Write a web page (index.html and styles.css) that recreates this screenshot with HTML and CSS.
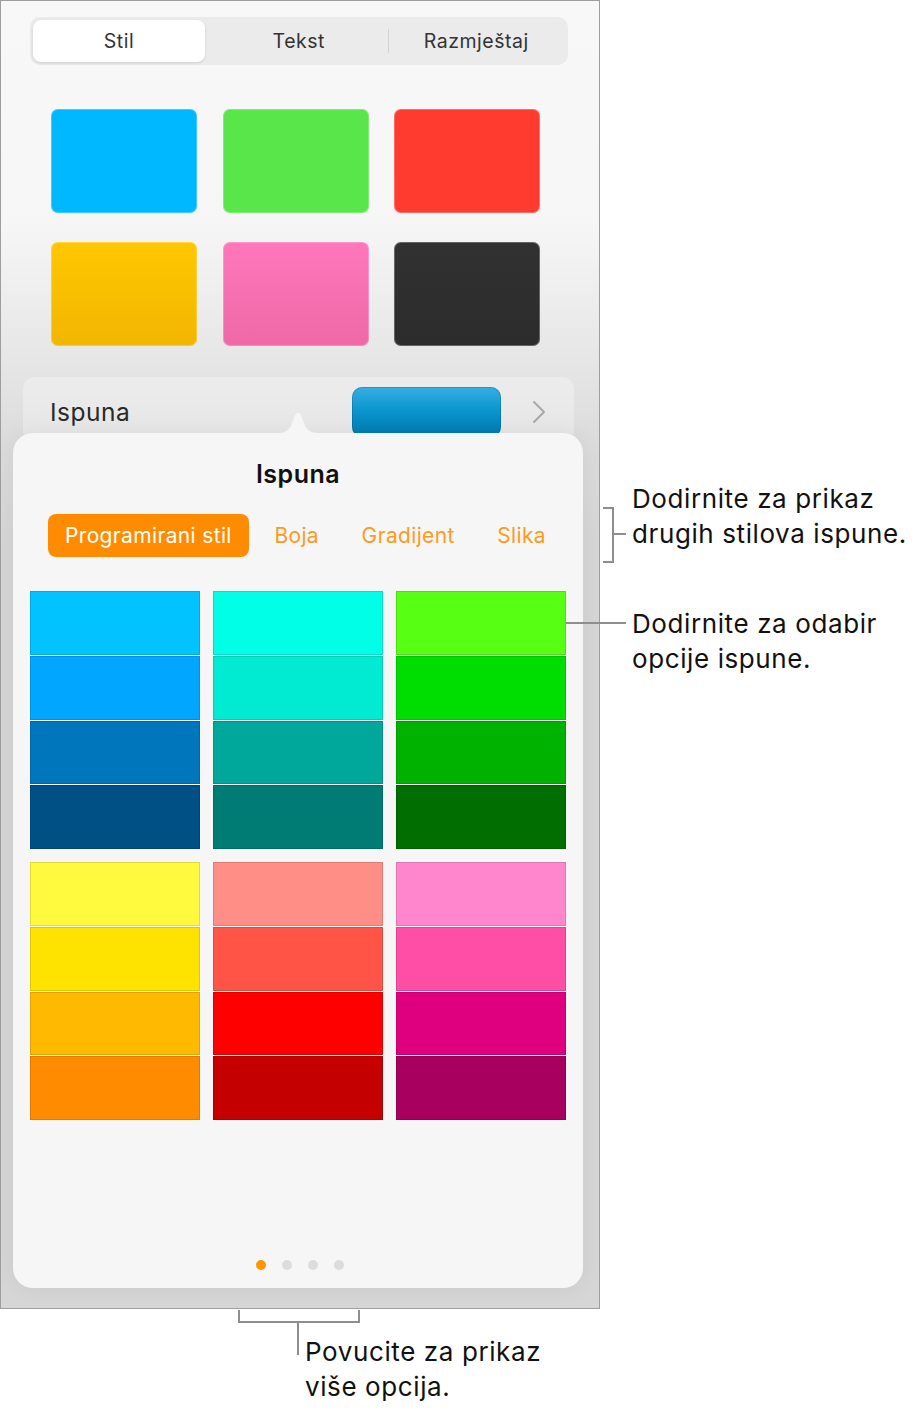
FILE: index.html
```html
<!DOCTYPE html>
<html>
<head>
    <meta charset="utf-8">
    <link rel="stylesheet" href="styles.css">
</head>
<body>
    <div class="page">
        <div class="panel">
            <div class="segmented">
                <div class="seg seg-active">Stil</div>
                <div class="seg">Tekst</div>
                <div class="seg seg-divided">Razmještaj</div>
            </div>

            <div class="presets">
                <div class="preset preset-blue"></div>
                <div class="preset preset-green"></div>
                <div class="preset preset-red"></div>
                <div class="preset preset-yellow"></div>
                <div class="preset preset-pink"></div>
                <div class="preset preset-dark"></div>
            </div>

            <div class="fill-row">
                <div class="fill-label">Ispuna</div>
                <div class="fill-well"></div>
                <svg class="fill-chevron" width="14" height="24" viewBox="0 0 14 24">
                    <path d="M2 2 L12 12 L2 22" fill="none" stroke="#a9a9a9" stroke-width="2" stroke-linecap="round" stroke-linejoin="round"/>
                </svg>
            </div>

            <div class="popover">
                <svg class="popover-arrow" width="40" height="24" viewBox="0 0 40 24">
                    <path d="M0 23 C8 23 10 20 13 16 L17 5 Q20 0 23 5 L27 16 C30 20 32 23 40 23 Z" fill="#f6f6f6"/>
                </svg>
                <h2 class="popover-title">Ispuna</h2>

                <div class="tabs">
                    <div class="tab tab-active">Programirani stil</div>
                    <div class="tab">Boja</div>
                    <div class="tab">Gradijent</div>
                    <div class="tab">Slika</div>
                </div>

                <div class="palette">
                    <div class="shade-group">
                        <div class="shade" style="background:#00c3ff"></div>
                        <div class="shade" style="background:#00a6ff"></div>
                        <div class="shade" style="background:#0076bd"></div>
                        <div class="shade" style="background:#004f85"></div>
                    </div>
                    <div class="shade-group">
                        <div class="shade" style="background:#00ffe7"></div>
                        <div class="shade" style="background:#00ebd1"></div>
                        <div class="shade" style="background:#00a79b"></div>
                        <div class="shade" style="background:#007c74"></div>
                    </div>
                    <div class="shade-group">
                        <div class="shade" style="background:#57ff13"></div>
                        <div class="shade" style="background:#00dd00"></div>
                        <div class="shade" style="background:#00b200"></div>
                        <div class="shade" style="background:#006e00"></div>
                    </div>
                    <div class="shade-group">
                        <div class="shade" style="background:#fffa3e"></div>
                        <div class="shade" style="background:#ffe300"></div>
                        <div class="shade" style="background:#ffba00"></div>
                        <div class="shade" style="background:#ff8b00"></div>
                    </div>
                    <div class="shade-group">
                        <div class="shade" style="background:#ff8e86"></div>
                        <div class="shade" style="background:#ff5446"></div>
                        <div class="shade" style="background:#ff0000"></div>
                        <div class="shade" style="background:#c50000"></div>
                    </div>
                    <div class="shade-group">
                        <div class="shade" style="background:#ff86cc"></div>
                        <div class="shade" style="background:#ff4ea6"></div>
                        <div class="shade" style="background:#df007f"></div>
                        <div class="shade" style="background:#a8005e"></div>
                    </div>
                </div>

                <div class="dots">
                    <span class="dot dot-active"></span>
                    <span class="dot"></span>
                    <span class="dot"></span>
                    <span class="dot"></span>
                </div>
            </div>
        </div>

        <!-- callouts -->
        <div class="bracket bracket-tabs"></div>
        <div class="leader leader-tabs"></div>
        <p class="callout callout-tabs">Dodirnite za prikaz<br>drugih stilova ispune.</p>

        <div class="leader leader-palette"></div>
        <p class="callout callout-palette">Dodirnite za odabir<br>opcije ispune.</p>

        <div class="bracket-bottom"></div>
        <div class="leader-down"></div>
        <p class="callout callout-dots">Povucite za prikaz<br>više opcija.</p>
    </div>
</body>
</html>
```

FILE: styles.css
```css
body {
    margin: 0;
    background: #fff;
    font-family: 'Inter', 'Noto Sans', sans-serif;
}

.page {
    position: relative;
    width: 924px;
    height: 1412px;
}

.panel {
    box-sizing: border-box;
    width: 600px;
    height: 1309px;
    padding-top: 16px;
    border: 1px solid #9e9e9e;
    background: linear-gradient(to bottom, #f8f8f8 0, #f6f6f6 220px, #e6e6e6 360px, #dcdcdc 440px, #d6d6d6 540px, #d6d6d6 100%);
}

/* segmented control */
.segmented {
    display: flex;
    height: 48px;
    margin: 0 31px 0 29px;
    padding: 3px;
    box-sizing: border-box;
    background: #ebebeb;
    border-radius: 10px;
}

.seg {
    flex: 1;
    display: flex;
    align-items: center;
    justify-content: center;
    position: relative;
    font-size: 19.5px;
    letter-spacing: 0.5px;
    color: #333;
}

.seg-active {
    flex: 0 0 172px;
    margin-right: 5px;
    background: #fff;
    border-radius: 8px;
    box-shadow: 0 1px 3px rgba(0,0,0,0.12);
}

.seg-divided::before {
    content: '';
    position: absolute;
    left: 0;
    top: 9px;
    width: 1px;
    height: 24px;
    background: #d4d4d4;
}

/* preset swatches */
.presets {
    display: grid;
    grid-template-columns: repeat(3, 146px);
    grid-auto-rows: 104px;
    column-gap: 25.5px;
    row-gap: 29px;
    margin-top: 44px;
    padding-left: 50px;
}

.preset {
    border-radius: 7px;
    box-shadow: inset 0 0 0 1px rgba(255,255,255,0.25);
}

.preset-blue { background: #00b8ff; }
.preset-green { background: #58e64a; }
.preset-red { background: #ff3b30; }
.preset-yellow { background: linear-gradient(to bottom, #ffc700, #f2b600); }
.preset-pink { background: linear-gradient(to bottom, #ff77bb, #ee69a6); }
.preset-dark { background: linear-gradient(to bottom, #313131, #2c2c2c); }

/* fill row */
.fill-row {
    display: flex;
    align-items: flex-start;
    height: 66px;
    box-sizing: border-box;
    margin: 31px 25px 0 22px;
    padding: 10px 28px 0 27px;
    background: rgba(255,255,255,0.3);
    border-radius: 12px;
}

.fill-label {
    flex: 1;
    font-size: 24.5px;
    letter-spacing: 0.5px;
    line-height: 50px;
    color: #2a2a2a;
}

.fill-well {
    width: 149px;
    height: 50px;
    border-radius: 10px;
    background: linear-gradient(to bottom, #36afe3 0, #0b97d0 45%, #0078ad 100%);
    box-shadow: inset 0 0 0 1px rgba(0,60,100,0.25);
}

.fill-chevron {
    margin: 13px 0 0 31px;
}

/* popover */
.popover {
    position: relative;
    z-index: 1;
    height: 855px;
    margin: -10px 16px 0 12px;
    padding: 0 17px;
    background: #f6f6f6;
    border-radius: 20px;
    box-shadow: 0 0 24px rgba(0,0,0,0.06);
}

.popover-arrow {
    position: absolute;
    left: 265px;
    top: -23px;
}

.popover-title {
    margin: 0;
    padding-top: 26px;
    font-size: 25px;
    letter-spacing: 0.5px;
    line-height: 30px;
    font-weight: 600;
    text-align: center;
    color: #111;
}

.tabs {
    display: flex;
    justify-content: space-between;
    height: 43px;
    margin-top: 25px;
    padding: 0 3px 0 18px;
}

.tab {
    display: flex;
    align-items: center;
    padding: 0 17px;
    font-size: 21px;
    letter-spacing: 0.35px;
    color: #ff9a1e;
    border-radius: 8px;
}

.tab-active {
    background: #ff8c00;
    color: #fff;
}

.palette {
    display: grid;
    grid-template-columns: repeat(3, 170px);
    column-gap: 13px;
    row-gap: 13px;
    margin-top: 34px;
}

.shade-group {
    display: grid;
    grid-template-rows: repeat(4, 1fr);
    row-gap: 1px;
    height: 258px;
    background: #fff;
}

.shade {
    box-shadow: inset 0 0 0 1px rgba(0,0,0,0.12);
}

.dots {
    display: flex;
    justify-content: center;
    gap: 16px;
    margin-top: 140px;
    padding-left: 4px;
}

.dot {
    width: 10px;
    height: 10px;
    border-radius: 50%;
    background: #dcdcdc;
}

.dot-active {
    background: #ff9500;
}

/* callouts */
.callout {
    position: absolute;
    margin: 0;
    font-size: 26px;
    letter-spacing: 0.6px;
    line-height: 35px;
    color: #111;
}

.callout-tabs { left: 632px; top: 481px; }
.callout-palette { left: 632px; top: 606px; }
.callout-dots { left: 305px; top: 1334px; }

.bracket {
    position: absolute;
    left: 603px;
    top: 507px;
    width: 9px;
    height: 52px;
    border: 2px solid #8e8e8e;
    border-left: none;
}

.leader {
    position: absolute;
    z-index: 2;
    height: 2px;
    background: #8e8e8e;
}

.leader-tabs { left: 613px; top: 533px; width: 13px; }
.leader-palette { left: 566px; top: 622px; width: 60px; }

.bracket-bottom {
    position: absolute;
    left: 238px;
    top: 1310px;
    width: 118px;
    height: 11px;
    border: 2px solid #8e8e8e;
    border-top: none;
}

.leader-down {
    position: absolute;
    left: 297px;
    top: 1322px;
    width: 2px;
    height: 33px;
    background: #8e8e8e;
}
```
